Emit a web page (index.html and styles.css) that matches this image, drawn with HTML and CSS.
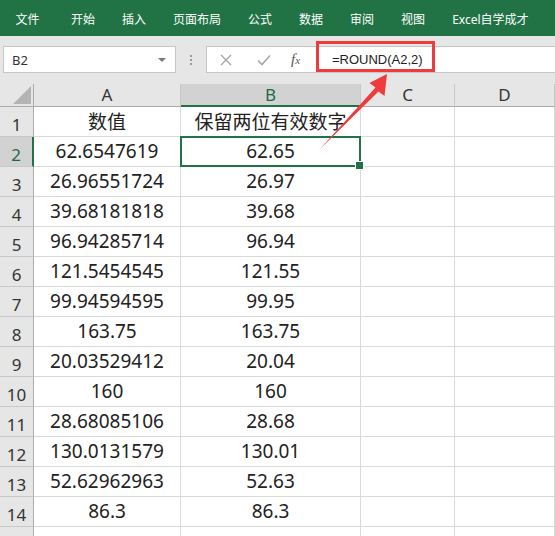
FILE: index.html
```html
<!DOCTYPE html>
<html lang="zh-CN">
<head>
    <meta charset="UTF-8">
    <meta name="viewport" content="width=device-width, initial-scale=1.0">
    <title>ROUND</title>
    <link rel="stylesheet" href="styles.css">
</head>
<body>
    <div class="ribbon">
        <span class="tab tab-file">文件</span>
        <span class="tab">开始</span>
        <span class="tab">插入</span>
        <span class="tab">页面布局</span>
        <span class="tab">公式</span>
        <span class="tab">数据</span>
        <span class="tab">审阅</span>
        <span class="tab">视图</span>
        <span class="tab">Excel自学成才</span>
    </div>

    <div class="toolbar">
        <div class="namebox">
            <span>B2</span>
            <span class="caret"></span>
        </div>
        <div class="grip"><i></i><i></i><i></i></div>
        <div class="formula">
            <div class="fbtns">
                <svg width="12" height="12" viewBox="0 0 12 12"><path d="M1 1L11 11M11 1L1 11" stroke="#a6a6a6" stroke-width="1.4" fill="none"/></svg>
                <svg width="14" height="12" viewBox="0 0 14 12"><path d="M1 6.5L5 10.5L13 1.5" stroke="#a6a6a6" stroke-width="1.6" fill="none"/></svg>
                <span class="fx">f<small>x</small></span>
            </div>
            <div class="finput">=ROUND(A2,2)</div>
        </div>
    </div>

    <div class="sheet">
        <div class="hd corner"><span class="tri"></span></div>
        <div class="hd col">A</div>
        <div class="hd col active-col">B</div>
        <div class="hd col">C</div>
        <div class="hd col">D</div>

        <div class="hd row">1</div><div class="cell">数值</div><div class="cell">保留两位有效数字</div><div class="cell"></div><div class="cell"></div>
        <div class="hd row active-row">2</div><div class="cell">62.6547619</div><div class="cell sel">62.65</div><div class="cell"></div><div class="cell"></div>
        <div class="hd row">3</div><div class="cell">26.96551724</div><div class="cell">26.97</div><div class="cell"></div><div class="cell"></div>
        <div class="hd row">4</div><div class="cell">39.68181818</div><div class="cell">39.68</div><div class="cell"></div><div class="cell"></div>
        <div class="hd row">5</div><div class="cell">96.94285714</div><div class="cell">96.94</div><div class="cell"></div><div class="cell"></div>
        <div class="hd row">6</div><div class="cell">121.5454545</div><div class="cell">121.55</div><div class="cell"></div><div class="cell"></div>
        <div class="hd row">7</div><div class="cell">99.94594595</div><div class="cell">99.95</div><div class="cell"></div><div class="cell"></div>
        <div class="hd row">8</div><div class="cell">163.75</div><div class="cell">163.75</div><div class="cell"></div><div class="cell"></div>
        <div class="hd row">9</div><div class="cell">20.03529412</div><div class="cell">20.04</div><div class="cell"></div><div class="cell"></div>
        <div class="hd row">10</div><div class="cell">160</div><div class="cell">160</div><div class="cell"></div><div class="cell"></div>
        <div class="hd row">11</div><div class="cell">28.68085106</div><div class="cell">28.68</div><div class="cell"></div><div class="cell"></div>
        <div class="hd row">12</div><div class="cell">130.0131579</div><div class="cell">130.01</div><div class="cell"></div><div class="cell"></div>
        <div class="hd row">13</div><div class="cell">52.62962963</div><div class="cell">52.63</div><div class="cell"></div><div class="cell"></div>
        <div class="hd row">14</div><div class="cell">86.3</div><div class="cell">86.3</div><div class="cell"></div><div class="cell"></div>
        <div class="hd row"></div><div class="cell"></div><div class="cell"></div><div class="cell"></div><div class="cell"></div>
    </div>

    <!-- annotation on top of the screenshot -->
    <div class="callout"></div>
    <svg class="arrow" width="555" height="536" viewBox="0 0 555 536">
        <polygon points="320,149 378.5,91.5 384.5,96 387,74 369.5,83 375.5,87.5" fill="#ef3b3b"/>
    </svg>
</body>
</html>
```

FILE: styles.css
```css
*{
    margin: 0;
    padding: 0;
    box-sizing: border-box;
}
body{
    width: 555px;
    height: 536px;
    overflow: hidden;
    position: relative;
    background: #fff;
    font-family: 'Noto Sans', 'Noto Sans CJK SC', sans-serif;
    color: #222;
}

/* ribbon tabs */
.ribbon{
    height: 36px;
    background: #217346;
    display: flex;
    align-items: center;
    padding: 4px 0 0 2px;
}
.tab{
    color: #fff;
    font-size: 12px;
    line-height: 16px;
    padding: 0 13.5px;
    white-space: nowrap;
}
.tab-file{
    padding-right: 18px;
}

/* name box + formula bar */
.toolbar{
    height: 48px;
    background: #e6e6e6;
    display: flex;
    padding: 10px 0 0 3px;
}
.namebox{
    width: 173px;
    height: 27px;
    background: #fff;
    border: 1px solid #c6c6c6;
    display: flex;
    align-items: center;
    justify-content: space-between;
    padding: 0 9px 0 8px;
    font-size: 13px;
    color: #333;
}
.caret{
    width: 0;
    height: 0;
    border-left: 4px solid transparent;
    border-right: 4px solid transparent;
    border-top: 4px solid #7a7a7a;
}
.grip{
    width: 30px;
    height: 27px;
    display: flex;
    flex-direction: column;
    align-items: center;
    justify-content: center;
    gap: 2px;
}
.grip i{
    width: 2px;
    height: 2px;
    background: #9a9a9a;
}
.formula{
    flex: 1;
    height: 27px;
    background: #fff;
    border: 1px solid #c6c6c6;
    border-right: none;
    display: flex;
}
.fbtns{
    width: 110px;
    display: flex;
    align-items: center;
    padding-left: 13px;
    gap: 0;
}
.fbtns svg:first-child{
    margin-right: 25px;
}
.fbtns svg:nth-child(2){
    margin-right: 20px;
}
.fx{
    font-family: 'Liberation Serif', serif;
    font-style: italic;
    font-size: 15px;
    color: #555;
}
.fx small{
    font-size: 11px;
}
.finput{
    flex: 1;
    border-left: 1px solid #c6c6c6;
    padding-left: 14px;
    font-family: 'Liberation Sans', sans-serif;
    font-size: 13px;
    line-height: 25px;
    color: #222;
}

/* sheet grid */
.sheet{
    display: grid;
    grid-template-columns: 34px 147px 180px 94px 100px;
    grid-template-rows: 23px;
    grid-auto-rows: 30px;
}
.hd{
    background: #e6e6e6;
    border-right: 1px solid #c8c8c8;
    border-bottom: 1px solid #c8c8c8;
    font-size: 17px;
    color: #333;
    display: flex;
    justify-content: center;
}
.col{
    align-items: center;
    line-height: 20px;
    border-bottom-color: #ababab;
}
.row{
    align-items: flex-end;
    line-height: 20px;
    padding-bottom: 1px;
    border-right-color: #ababab;
}
.corner{
    position: relative;
    border-right-color: #ababab;
    border-bottom-color: #ababab;
}
.tri{
    position: absolute;
    right: 2px;
    bottom: 2px;
    width: 18px;
    height: 18px;
    background: #b4b4b4;
    clip-path: polygon(100% 0, 100% 100%, 0 100%);
}
.active-col{
    background: #d2d2d2;
    border-bottom: 2px solid #217346;
    color: #1e6a45;
}
.active-row{
    background: #d2d2d2;
    border-right: 2px solid #217346;
    color: #1e6a45;
}
.cell{
    border-right: 1px solid #d9d9d9;
    border-bottom: 1px solid #d9d9d9;
    font-size: 19px;
    display: flex;
    align-items: center;
    justify-content: center;
    padding-bottom: 1px;
    white-space: nowrap;
}
.sel{
    position: relative;
}
.sel::after{
    content: "";
    position: absolute;
    top: -1px;
    left: -1px;
    right: -1px;
    bottom: -1px;
    border: 2px solid #217346;
}
.sel::before{
    content: "";
    position: absolute;
    right: -4px;
    bottom: -4px;
    width: 7px;
    height: 7px;
    background: #217346;
    border: 1px solid #fff;
    z-index: 1;
}

/* red marking */
.callout{
    position: absolute;
    left: 316px;
    top: 41px;
    width: 119px;
    height: 31px;
    border: 3px solid #ef3b3b;
}
.arrow{
    position: absolute;
    left: 0;
    top: 0;
    pointer-events: none;
}
```
